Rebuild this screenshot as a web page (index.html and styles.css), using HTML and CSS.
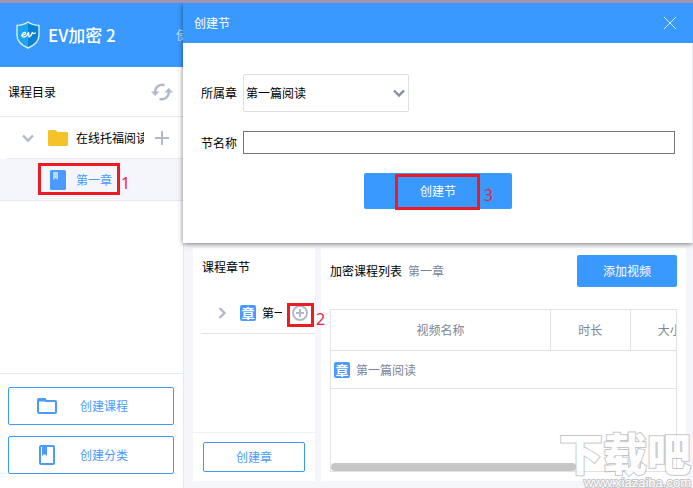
FILE: index.html
```html
<!DOCTYPE html>
<html lang="zh-CN">
<head>
  <meta charset="UTF-8">
  <meta name="viewport" content="width=device-width, initial-scale=1.0">
  <title>EV加密2</title>
  <link rel="stylesheet" href="styles.css">
</head>
<body>
  <header class="topbar">
    <svg class="logo" viewBox="0 0 24 28" width="24" height="28">
      <defs>
        <linearGradient id="shield" x1="0" y1="0" x2="1" y2="0">
          <stop offset="0.5" stop-color="#1fa3ee"/>
          <stop offset="0.5" stop-color="#0a83d6"/>
        </linearGradient>
      </defs>
      <path d="M12 1C9 3.2 5 4.2 1 4.4V14c0 6.500 5 10.500 11 13 6-2.500 11-6.500 11-13V4.400C19 4.200 15 3.200 12 1z" fill="url(#shield)" stroke="#d5eeff" stroke-width="1.400"/>
      <path d="M5.500 14.500c2.500 0 4.500-1.500 4-2.800-.6-1.200-3.500.3-3.500 2.600 0 2.700 3.500 2 5-.2l1.500-2.600c.5 1.500 0 3.500.6 4.600 1.600-.8 2.600-2.500 3.200-4.600.6 1 1.600 1.300 3 .5" fill="none" stroke="#fff" stroke-width="1.300" stroke-linecap="round" stroke-linejoin="round"/>
    </svg>
    <h1>EV加密 2</h1>
    <a class="nav-link" href="#">使</a>
  </header>

  <div class="layout">
    <aside class="sidebar">
      <div class="sidebar-head">
        <h2>课程目录</h2>
        <button class="icon-btn" aria-label="刷新">
          <svg viewBox="0 0 22 18" width="22" height="18" fill="none" stroke="#b3b9cb" stroke-width="2.400">
            <path d="M4.200 9.500A7 7 0 0 1 13.500 2.200"/>
            <path d="M17.800 8.500A7 7 0 0 1 8.500 15.800"/>
            <path d="M0 8.500H8.500L4.200 13z" fill="#b3b9cb" stroke="none"/>
            <path d="M13.500 9.500H22L17.800 5z" fill="#b3b9cb" stroke="none"/>
          </svg>
        </button>
      </div>

      <ul class="tree">
        <li class="tree-parent">
          <svg class="arrow" viewBox="0 0 12 12" width="12" height="12" fill="none" stroke="#b3b9cb" stroke-width="2.400">
            <path d="M1 3.500L6 8.500L11 3.500"/>
          </svg>
          <svg viewBox="0 0 20 16" width="20" height="16">
            <path d="M0 1.500Q0 0 1.500 0H7.500L9.500 2H18.500Q20 2 20 3.500V14.500Q20 16 18.500 16H1.500Q0 16 0 14.500z" fill="#f5c228"/>
          </svg>
          <span class="tree-text">在线托福阅读</span>
          <button class="icon-btn" aria-label="添加">
            <svg viewBox="0 0 14 14" width="14" height="14" stroke="#b3b9cb" stroke-width="2">
              <path d="M7 0V14M0 7H14"/>
            </svg>
          </button>
        </li>
        <li class="tree-child">
          <svg viewBox="0 0 16 20" width="16" height="20">
            <rect width="16" height="20" rx="1.500" fill="#4b9aff"/>
            <path d="M3 2H8V10L5.500 8L3 10z" fill="#b7d7ff"/>
          </svg>
          <a href="#">第一章</a>
          <span class="mark mark-one"></span>
          <span class="mark-num num-one">1</span>
        </li>
      </ul>

      <div class="sidebar-foot">
        <button class="outline-btn wide-btn">
          <svg viewBox="0 0 20 16" width="20" height="16" fill="none" stroke="#4b9aff" stroke-width="2">
            <path d="M1 2V14Q1 15 2 15H18Q19 15 19 14V4Q19 3 18 3H9L8 1H2Q1 1 1 2z"/>
            <path d="M2 2H9" stroke-width="3"/>
          </svg>
          创建课程
        </button>
        <button class="outline-btn wide-btn">
          <svg viewBox="0 0 20 20" width="20" height="20">
            <rect x="3" y="1" width="14" height="18" rx="1" fill="none" stroke="#4b9aff" stroke-width="2"/>
            <path d="M5 2H10V11L7.500 9L5 11z" fill="#4b9aff"/>
          </svg>
          创建分类
        </button>
      </div>
    </aside>

    <main class="content">
      <section class="panel chapters">
        <h2>课程章节</h2>
        <div class="chapter-row">
          <svg class="arrow" viewBox="0 0 12 12" width="12" height="12" fill="none" stroke="#b3b9cb" stroke-width="2.400">
            <path d="M3.500 1L8.500 6L3.500 11"/>
          </svg>
          <span class="badge">章</span>
          <span class="chapter-name">第一</span>
          <button class="icon-btn" aria-label="添加节">
            <svg viewBox="0 0 16 16" width="16" height="16" fill="none" stroke="#b3b9cb" stroke-width="2">
              <circle cx="8" cy="8" r="7"/>
              <path d="M8 4V12M4 8H12"/>
            </svg>
          </button>
          <span class="mark mark-two"></span>
          <span class="mark-num num-two">2</span>
        </div>
        <div class="chapters-foot">
          <button class="outline-btn">创建章</button>
        </div>
      </section>

      <section class="panel videos">
        <div class="videos-head">
          <h2>加密课程列表</h2>
          <span class="crumb">第一章</span>
          <button class="primary-btn add-btn">添加视频</button>
        </div>
        <div class="table-box">
          <table>
            <thead>
              <tr>
                <th class="col-name">视频名称</th>
                <th>时长</th>
                <th>大小</th>
              </tr>
            </thead>
            <tbody>
              <tr>
                <td colspan="3"><div class="cell"><span class="badge">章</span>第一篇阅读</div></td>
              </tr>
            </tbody>
          </table>
          <div class="scrollbar"></div>
        </div>
      </section>
    </main>
  </div>

  <div class="dialog" role="dialog" aria-labelledby="dialogTitle">
    <div class="dialog-head">
      <h2 id="dialogTitle">创建节</h2>
      <button class="icon-btn" aria-label="关闭">
        <svg viewBox="0 0 12 12" width="12" height="12" stroke="#d8eaff" stroke-width="1">
          <path d="M0 0L12 12M12 0L0 12"/>
        </svg>
      </button>
    </div>
    <form class="dialog-form">
      <div class="field">
        <label for="chapter">所属章</label>
        <div class="select-wrap">
          <select id="chapter">
            <option>第一篇阅读</option>
          </select>
          <svg viewBox="0 0 12 12" width="12" height="12" fill="none" stroke="#858da3" stroke-width="2.400">
            <path d="M1 3.500L6 8.500L11 3.500"/>
          </svg>
        </div>
      </div>
      <div class="field">
        <label for="sectionName">节名称</label>
        <input id="sectionName" type="text">
      </div>
      <div class="submit-row">
        <button type="button" class="primary-btn submit-btn">创建节</button>
        <span class="mark mark-three"></span>
        <span class="mark-num num-three">3</span>
      </div>
    </form>
  </div>

  <div class="watermark">
    <span class="watermark-name">下载吧</span>
    <span class="watermark-url">www.xiazaiba.com</span>
  </div>
</body>
</html>
```
FILE: styles.css
```css
* {
  box-sizing: border-box;
  margin: 0;
  padding: 0;
}

body {
  position: relative;
  display: flex;
  flex-direction: column;
  height: 100vh;
  overflow: hidden;
  border-top: 3px solid #a294b0;
  background-color: #fff;
  font-family: "Noto Sans CJK SC", sans-serif;
  font-size: 12px;
  line-height: 18px;
  color: #000;
}

h2 {
  font-size: 12px;
  font-weight: normal;
}

button,
input,
select {
  font: inherit;
}

button {
  cursor: pointer;
}

svg {
  display: block;
  flex-shrink: 0;
}

.icon-btn {
  flex-shrink: 0;
  border: none;
  background: none;
}

/* Top bar */
.topbar {
  display: flex;
  align-items: center;
  height: 64px;
  flex-shrink: 0;
  padding-left: 16px;
  background-color: #3a99ff;
  color: #fff;
}

.topbar h1 {
  margin-left: 8px;
  width: 128px;
  font-size: 17px;
  font-weight: 500;
  white-space: nowrap;
}

.nav-link {
  color: #c4e0ff;
  text-decoration: none;
}

.layout {
  display: flex;
  flex: 1;
  min-height: 0;
}

/* Sidebar */
.sidebar {
  display: flex;
  flex-direction: column;
  width: 184px;
  flex-shrink: 0;
  border-right: 1px solid #e8e9ee;
}

.sidebar-head {
  display: flex;
  justify-content: space-between;
  align-items: center;
  height: 50px;
  padding: 0 10px 0 8px;
  border-bottom: 1px solid #e8e9ee;
}

.tree {
  flex: 1;
  list-style: none;
}

.tree-parent {
  display: flex;
  align-items: center;
  height: 42px;
  margin-left: 7px;
  padding: 0 14px 0 15px;
  border-bottom: 1px solid #e8e9ee;
}

.tree-parent .arrow {
  margin-right: 14px;
}

.tree-text {
  flex: 1;
  margin: 0 11px 0 8px;
  overflow: hidden;
  white-space: nowrap;
}

.tree-child {
  position: relative;
  display: flex;
  align-items: center;
  gap: 10px;
  height: 42px;
  padding-left: 50px;
  border-bottom: 1px solid #e8e9ee;
  background-color: #f5f6fb;
}

.tree-child a {
  color: #4b9aff;
  text-decoration: none;
}

.sidebar-foot {
  display: flex;
  flex-direction: column;
  gap: 11px;
  padding: 13px 9px 14px 8px;
  border-top: 1px solid #e8e9ee;
}

/* Buttons */
.outline-btn {
  width: 100%;
  height: 30px;
  border: 1px solid #3a99ff;
  border-radius: 2px;
  background-color: #fff;
  color: #4b9aff;
}

.wide-btn {
  display: flex;
  align-items: center;
  gap: 23px;
  height: 38px;
  padding-left: 28px;
}

.primary-btn {
  border: none;
  border-radius: 2px;
  background-color: #3a99ff;
  color: #fff;
}

/* Content */
.content {
  display: flex;
  flex: 1;
  gap: 6px;
  min-width: 0;
  padding: 181px 7px 7px 9px;
  background-color: #f5f6fb;
}

.panel {
  display: flex;
  flex-direction: column;
  background-color: #fff;
}

.chapters {
  width: 122px;
  flex-shrink: 0;
}

.chapters h2 {
  padding: 10px 9px 17px;
}

.chapter-row {
  position: relative;
  display: flex;
  align-items: center;
  height: 41px;
  margin-left: 8px;
  padding: 0 7px 0 15px;
  border-bottom: 1px solid #e2e2e4;
}

.chapter-row .badge {
  margin: 0 6px 0 12px;
}

.chapter-name {
  width: 20px;
  margin-right: auto;
  overflow: hidden;
  white-space: nowrap;
}

.badge {
  width: 16px;
  height: 16px;
  flex-shrink: 0;
  border-radius: 2px;
  background-color: #4b9aff;
  color: #fff;
  font-size: 13px;
  font-weight: bold;
  line-height: 15px;
  text-align: center;
}

.chapters-foot {
  margin-top: auto;
  padding: 9px 10px;
  border-top: 1px solid #f0f1f4;
}

.videos {
  flex: 1;
  min-width: 0;
  padding: 7px 9px 9px;
}

.videos-head {
  display: flex;
  align-items: center;
  gap: 6px;
  margin-bottom: 22px;
}

.crumb {
  color: #7c8599;
}

.add-btn {
  width: 100px;
  height: 32px;
  margin-left: auto;
}

.table-box {
  position: relative;
  flex: 1;
  overflow: hidden;
  border: 1px solid #e2e2e4;
}

table {
  width: 379px;
  table-layout: fixed;
  border-collapse: separate;
  border-spacing: 0;
  color: #7c8599;
}

th {
  height: 41px;
  border-right: 1px solid #e2e2e4;
  border-bottom: 1px solid #e2e2e4;
  font-weight: normal;
}

.col-name {
  width: 220px;
}

td {
  height: 38px;
  padding-left: 3px;
  border-bottom: 1px solid #e2e2e4;
}

.cell {
  display: flex;
  align-items: center;
  gap: 6px;
}

.scrollbar {
  position: absolute;
  left: 0;
  bottom: 0;
  width: 71%;
  height: 8px;
  border-radius: 4px;
  background-color: #c6c6c6;
}

/* Dialog */
.dialog {
  position: absolute;
  top: 0;
  left: 183px;
  right: 0;
  background-color: #fff;
  box-shadow: 0 1px 5px rgba(0, 0, 0, 0.5);
}

.dialog-head {
  display: flex;
  justify-content: space-between;
  align-items: center;
  height: 40px;
  padding: 0 17px 0 11px;
  background-color: #3a99ff;
  color: #fff;
}

.dialog-form {
  padding: 31px 17px 34px 18px;
  border-right: 1px solid #e8e9ee;
}

.field {
  display: flex;
  align-items: center;
  margin-bottom: 19px;
}

.field label {
  width: 42px;
  flex-shrink: 0;
}

.select-wrap {
  position: relative;
  width: 166px;
}

.select-wrap select {
  width: 100%;
  height: 38px;
  padding-left: 2px;
  border: 1px solid #dcdfe6;
  border-radius: 2px;
  background-color: #fff;
  color: #000;
  appearance: none;
}

.select-wrap svg {
  position: absolute;
  top: 13px;
  right: 4px;
  pointer-events: none;
}

.field input {
  flex: 1;
  min-width: 0;
  height: 23px;
  padding: 0 4px;
  border: 1px solid #767676;
}

.submit-row {
  position: relative;
  width: 148px;
  margin: 0 auto;
}

.submit-btn {
  display: block;
  width: 100%;
  height: 36px;
}

/* Numbered step marks */
.mark {
  position: absolute;
  border: 3px solid #ed1c24;
  pointer-events: none;
}

.mark-num {
  position: absolute;
  color: #ed1c44;
  font-family: "Noto Sans", sans-serif;
  font-size: 16px;
}

.mark-one {
  top: 4px;
  left: 38px;
  width: 82px;
  height: 32px;
}

.num-one {
  top: 15px;
  left: 121px;
}

.mark-two {
  top: 10px;
  right: 1px;
  width: 27px;
  height: 24px;
}

.num-two {
  top: 17px;
  left: 115px;
}

.mark-three {
  top: 1px;
  left: 31px;
  width: 85px;
  height: 36px;
}

.num-three {
  top: 13px;
  left: 120px;
}

/* Watermark */
.watermark {
  position: absolute;
  right: 2px;
  bottom: -3px;
  display: flex;
  flex-direction: column;
  align-items: flex-end;
  color: #fff;
  white-space: nowrap;
  pointer-events: none;
  opacity: 0.75;
  -webkit-text-stroke: 2px #b4b4b4;
  paint-order: stroke fill;
}

.watermark-name {
  font-size: 44px;
  font-weight: 900;
  line-height: 46px;
}

.watermark-url {
  font-family: "Liberation Sans", sans-serif;
  font-size: 13px;
  line-height: 16px;
}
```
